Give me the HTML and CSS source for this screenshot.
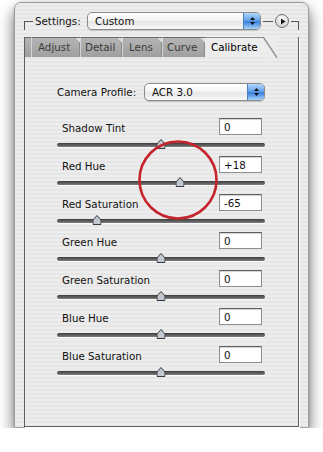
FILE: index.html
```html
<!DOCTYPE html>
<html lang="en">
<head>
  <meta charset="UTF-8" />
  <meta name="viewport" content="width=device-width, initial-scale=1.0" />
  <title>Camera Raw - Calibrate</title>
  <link rel="stylesheet" href="styles.css">
</head>
<body>
  <div class="window">
    <div class="group-head">
      <span class="corner corner-left"></span>
      <span class="head-label">Settings:</span>
      <div class="popup popup-settings">
        <span class="popup-text">Custom</span>
        <span class="stepper">
          <svg width="7" height="10" viewBox="0 0 7 10"><path d="M3.5 1 L6 4 H1 Z M1 6 H6 L3.5 9 Z" fill="#111"/></svg>
        </span>
      </div>
      <span class="rule"></span>
      <span class="menu-btn">
        <svg width="6" height="7" viewBox="0 0 6 7"><path d="M1 0.5 L5.5 3.5 L1 6.5 Z" fill="#111"/></svg>
      </span>
      <span class="corner corner-right"></span>
    </div>

    <div class="group-body">
      <div class="tabs">
        <span class="tab-lead"></span>
        <span class="tab tab-adjust">Adjust</span>
        <span class="tab tab-detail">Detail</span>
        <span class="tab tab-lens">Lens</span>
        <span class="tab tab-curve">Curve</span>
        <span class="tab-active">Calibrate</span>
      </div>

      <div class="panel">
        <div class="profile-row">
          <span>Camera Profile:</span>
          <div class="popup popup-profile">
            <span class="popup-text">ACR 3.0</span>
            <span class="stepper">
              <svg width="7" height="10" viewBox="0 0 7 10"><path d="M3.5 1 L6 4 H1 Z M1 6 H6 L3.5 9 Z" fill="#111"/></svg>
            </span>
          </div>
        </div>

        <div class="sliders">
          <div class="slider-row">
            <div class="slider-head"><span>Shadow Tint</span><input class="value" value="0" readonly></div>
            <div class="track"><svg class="thumb" style="left:50%" viewBox="0 0 9 10"><path d="M4.5 0.5 L8.5 5 V9.5 H0.5 V5 Z" fill="#c2c8d2" stroke="#3a3a3a"/></svg></div>
          </div>
          <div class="slider-row">
            <div class="slider-head"><span>Red Hue</span><input class="value" value="+18" readonly></div>
            <div class="track"><svg class="thumb" style="left:59%" viewBox="0 0 9 10"><path d="M4.5 0.5 L8.5 5 V9.5 H0.5 V5 Z" fill="#c2c8d2" stroke="#3a3a3a"/></svg></div>
          </div>
          <div class="slider-row">
            <div class="slider-head"><span>Red Saturation</span><input class="value" value="-65" readonly></div>
            <div class="track"><svg class="thumb" style="left:19%" viewBox="0 0 9 10"><path d="M4.5 0.5 L8.5 5 V9.5 H0.5 V5 Z" fill="#c2c8d2" stroke="#3a3a3a"/></svg></div>
          </div>
          <div class="slider-row">
            <div class="slider-head"><span>Green Hue</span><input class="value" value="0" readonly></div>
            <div class="track"><svg class="thumb" style="left:50%" viewBox="0 0 9 10"><path d="M4.5 0.5 L8.5 5 V9.5 H0.5 V5 Z" fill="#c2c8d2" stroke="#3a3a3a"/></svg></div>
          </div>
          <div class="slider-row">
            <div class="slider-head"><span>Green Saturation</span><input class="value" value="0" readonly></div>
            <div class="track"><svg class="thumb" style="left:50%" viewBox="0 0 9 10"><path d="M4.5 0.5 L8.5 5 V9.5 H0.5 V5 Z" fill="#c2c8d2" stroke="#3a3a3a"/></svg></div>
          </div>
          <div class="slider-row">
            <div class="slider-head"><span>Blue Hue</span><input class="value" value="0" readonly></div>
            <div class="track"><svg class="thumb" style="left:50%" viewBox="0 0 9 10"><path d="M4.5 0.5 L8.5 5 V9.5 H0.5 V5 Z" fill="#c2c8d2" stroke="#3a3a3a"/></svg></div>
          </div>
          <div class="slider-row">
            <div class="slider-head"><span>Blue Saturation</span><input class="value" value="0" readonly></div>
            <div class="track"><svg class="thumb" style="left:50%" viewBox="0 0 9 10"><path d="M4.5 0.5 L8.5 5 V9.5 H0.5 V5 Z" fill="#c2c8d2" stroke="#3a3a3a"/></svg></div>
          </div>
        </div>
      </div>
    </div>

    <!-- red callout ring over the Red Hue slider -->
    <svg class="highlight" width="84" height="84" viewBox="0 0 84 84">
      <circle cx="42" cy="42" r="38.5" fill="none" stroke="#c5242d" stroke-width="2.6"/>
    </svg>
  </div>
</body>
</html>
```

FILE: styles.css
```css
/* Base */
* { margin: 0; padding: 0; box-sizing: border-box; }
body {
  background: #fff;
  font-family: "DejaVu Sans", Verdana, sans-serif;
  font-size: 10.3px;
  color: #111;
}

/* Window */
.window {
  position: relative;
  width: 295px;
  height: 426px;
  margin: 2px 0 0 14px;
  padding: 9px 9px 0;
  border: 1px solid #9c9c9c;
  border-radius: 7px 7px 0 0;
  background: repeating-linear-gradient(to bottom, #ededed 0, #ededed 2px, #e6e6e6 2px, #e6e6e6 4px);
  box-shadow: 0 8px 15px rgba(0, 0, 0, 0.6), 0 0 3px rgba(0, 0, 0, 0.15);
}

/* Settings header, sits on the group's top line */
.group-head {
  display: flex;
  align-items: center;
  height: 18px;
}
.corner {
  align-self: flex-end;
  height: 9px;
  border-top: 1px solid #555;
}
.corner-left { width: 9px; border-left: 1px solid #555; }
.corner-right { width: 8px; margin-left: 2px; border-right: 1px solid #555; }
.head-label { flex: 1; padding-left: 2px; }
.rule {
  width: 10px;
  height: 1px;
  margin: 0 2px;
  background: #555;
}
.menu-btn {
  width: 14px;
  height: 14px;
  display: flex;
  align-items: center;
  justify-content: center;
  padding-left: 1px;
  border: 1px solid #6e6e6e;
  border-radius: 50%;
  background: radial-gradient(circle at 50% 30%, #ffffff, #d6d6d6 70%, #bdbdbd);
}

/* Popup menus */
.popup {
  display: flex;
  align-items: center;
  height: 18px;
  border: 1px solid #8a8a8a;
  border-radius: 5px;
  overflow: hidden;
  background: linear-gradient(#ffffff 0%, #f4f4f4 45%, #e6e6e6 55%, #f8f8f8 100%);
  box-shadow: 0 1px 1px rgba(0, 0, 0, 0.15);
}
.popup-settings { width: 174px; }
.popup-profile { width: 121px; margin-left: auto; }
.popup-text { flex: 1; padding-left: 7px; }
.stepper {
  width: 17px;
  height: 100%;
  display: flex;
  align-items: center;
  justify-content: center;
  border-left: 1px solid #4f7fbf;
  background: linear-gradient(#b2d6fa 0%, #66a3ea 45%, #3b80da 55%, #a6d3fb 100%);
}

/* Group box */
.group-body {
  height: 390px;
  border: 1px solid #5f5f5f;
  border-top: none;
  box-shadow: 1px 1px 0 #fff;
}

/* Tabs */
.tabs {
  display: flex;
  height: 20px;
  margin-top: 7px;
}
.tab-lead,
.tab {
  background: linear-gradient(#b4b4b4, #9f9f9f);
  border-top: 1px solid #6a6a6a;
}
.tab-lead { width: 6px; }
.tab {
  position: relative;
  line-height: 19px;
  padding-left: 6px;
  color: #3a3a3a;
  border-left: 1px solid #d4d4d4;
  border-right: 1px solid #8a8a8a;
}
.tab::after {
  content: "";
  position: absolute;
  top: 0;
  right: -1px;
  width: 4px;
  height: 5px;
  background: linear-gradient(to top right, transparent 50%, #e0e0e0 50%);
}
.tab-adjust { width: 49px; }
.tab-detail { width: 42px; padding-left: 4px; }
.tab-lens { width: 40px; }
.tab-curve { width: 43px; padding-left: 4px; }
.tab-active {
  position: relative;
  width: 72px;
  padding-left: 6px;
  line-height: 19px;
  color: #000;
  background: #ececec;
  border-top: 1px solid #8c8c8c;
}
.tab-active::after {
  content: "";
  position: absolute;
  top: -1px;
  right: 0;
  width: 14px;
  height: 21px;
  background: linear-gradient(to top right, #ececec 46%, #7a7a7a 50%, #ececec 56%);
}

/* Panel */
.panel { padding: 26px 33px 0 32px; }
.profile-row {
  display: flex;
  align-items: center;
  height: 18px;
}

/* Sliders */
.sliders { margin-top: 17px; }
.slider-row { height: 38px; }
.slider-head {
  display: flex;
  align-items: center;
  justify-content: space-between;
  height: 17px;
  padding: 0 3px 0 5px;
}
.slider-head span { margin-top: 3px; }
.value {
  width: 43px;
  height: 17px;
  padding-left: 4px;
  font: inherit;
  color: #111;
  background: #fff;
  border: 1px solid #8e8e8e;
  border-top-color: #5e5e5e;
  box-shadow: inset 0 1px 1px rgba(0, 0, 0, 0.18);
  outline: none;
}
.track {
  position: relative;
  height: 4px;
  margin-top: 8px;
  border-radius: 2px;
  background: linear-gradient(#3c3c3c, #7e7e7e);
  box-shadow: 0 1px 0 #fbfbfb;
}
.thumb {
  position: absolute;
  top: -4px;
  width: 9px;
  height: 10px;
  transform: translateX(-50%);
}

/* Callout */
.highlight {
  position: absolute;
  left: 121px;
  top: 135px;
}
```
